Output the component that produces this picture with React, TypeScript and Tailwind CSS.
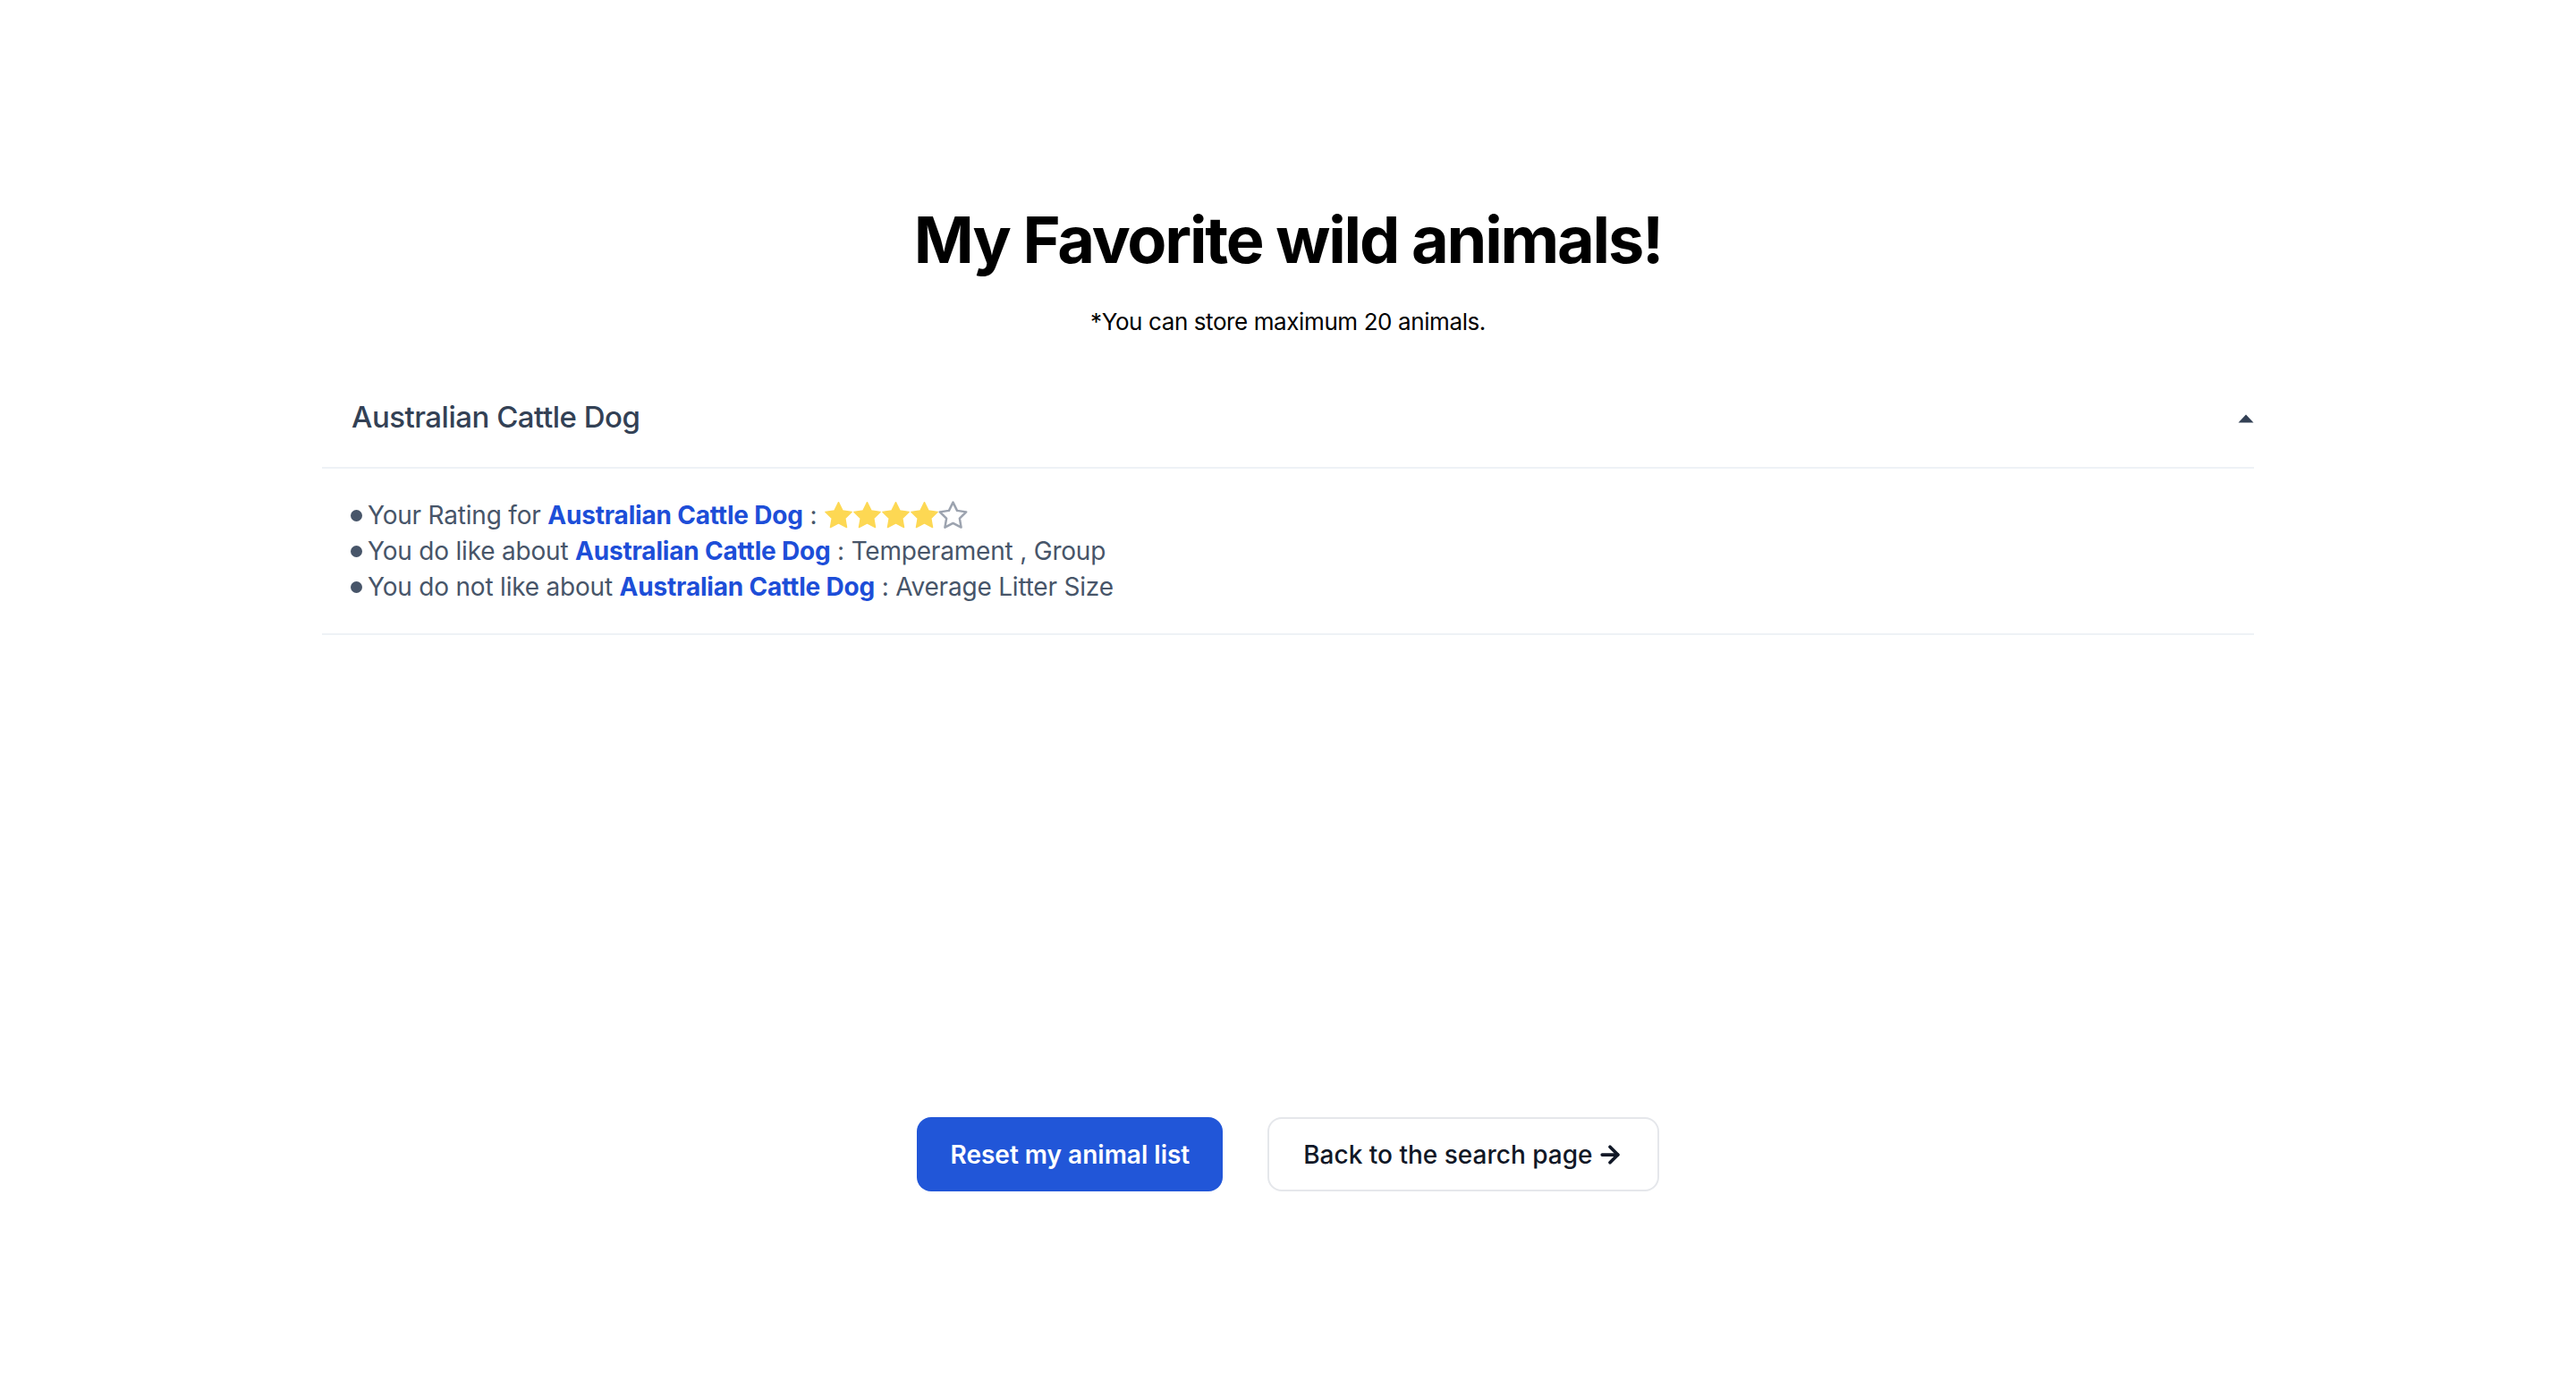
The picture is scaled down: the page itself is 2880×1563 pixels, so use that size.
import { ArrowRight } from "lucide-react";

const animal = "Australian Cattle Dog";

function Star({ filled }: { filled: boolean }) {
  return (
    <svg viewBox="0 0 24 24" className="w-[33px] h-[33px]">
      <path
        d="M12 1.2l3.3 6.7 7.4 1.1-5.35 5.2 1.26 7.35L12 18.1l-6.6 3.45 1.26-7.35L1.3 9l7.4-1.1z"
        fill={filled ? "#fdd853" : "none"}
        stroke={filled ? "#fdd853" : "#9ca3af"}
        strokeWidth={filled ? 1 : 1.8}
        strokeLinejoin="round"
      />
    </svg>
  );
}

function Item({ children }: { children: React.ReactNode }) {
  return (
    <li className="flex items-center h-[40px]">
      <span className="w-[13px] h-[13px] rounded-full bg-[#475569] mr-[6px]" />
      {children}
    </li>
  );
}

function Name() {
  return <span className="font-bold text-[#1d4ed8]">{animal}</span>;
}

export default function App() {
  return (
    <div className="min-h-screen bg-white font-['Inter',sans-serif]">
      <div className="mx-auto w-[2160px] pt-[232px]">
        <h1 className="text-center text-[72px] leading-none font-bold text-black tracking-[-2.2px]">
          My Favorite wild animals!
        </h1>
        <p className="mt-[36px] text-center text-[26px] leading-[40px] tracking-[-0.4px] text-black">
          *You can store maximum 20 animals.
        </p>

        <div className="mt-[32px]">
          <div className="flex items-center justify-between h-[112px] pl-[33px] border-b-2 border-[#eef2f6]">
            <span className="text-[33px] tracking-[-0.5px] font-medium text-[#334155]">{animal}</span>
            <svg viewBox="0 0 18 10" className="w-[18px] h-[10px] mt-[2px]">
              <path d="M9 0.5 L17.5 9.5 L0.5 9.5 Z" fill="#334155" />
            </svg>
          </div>
          <ul className="px-[32px] py-[32px] text-[28px] tracking-[-0.2px] text-[#475569] border-b-2 border-[#eef2f6]">
            <Item>
              <span className="whitespace-pre">Your Rating for </span>
              <Name />
              <span className="whitespace-pre"> : </span>
              <span className="flex items-center -space-x-[1px]">
                <Star filled />
                <Star filled />
                <Star filled />
                <Star filled />
                <Star filled={false} />
              </span>
            </Item>
            <Item>
              <span className="whitespace-pre">You do like about </span>
              <Name />
              <span className="whitespace-pre"> : Temperament , Group</span>
            </Item>
            <Item>
              <span className="whitespace-pre">You do not like about </span>
              <Name />
              <span className="whitespace-pre"> : Average Litter Size</span>
            </Item>
          </ul>
        </div>

        <div className="mt-[539px] flex justify-center gap-[50px]">
          <button className="h-[83px] px-[37px] rounded-[16px] bg-[#2156d8] text-white text-[28px] font-semibold">
            Reset my animal list
          </button>
          <button className="h-[83px] px-[38px] rounded-[16px] border-2 border-[#e5e7eb] bg-white text-[#111827] text-[28px] font-medium flex items-center gap-[4px]">
            Back to the search page
            <ArrowRight className="w-[30px] h-[30px]" strokeWidth={3} />
          </button>
        </div>
      </div>
    </div>
  );
}
